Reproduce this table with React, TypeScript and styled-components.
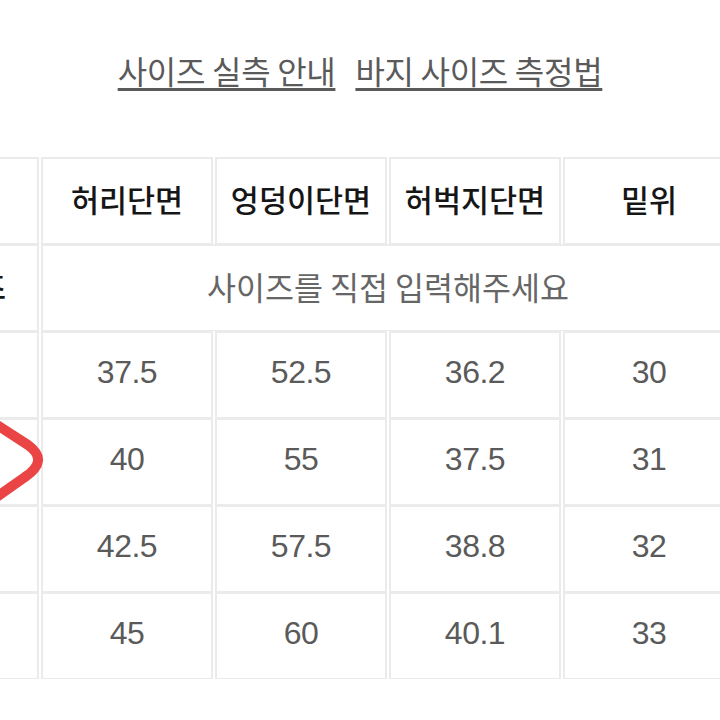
import React from "react";
import styled, { createGlobalStyle } from "styled-components";

const Global = createGlobalStyle`
  * { box-sizing: border-box; }
  html, body { margin: 0; padding: 0; background: #ffffff; }
  body { font-family: "Noto Sans CJK KR", "Noto Sans", sans-serif; overflow: hidden; }
`;

const Page = styled.div`
  position: relative;
  width: 720px;
  height: 720px;
  overflow: hidden;
  background: #fff;
`;

const TitleBar = styled.div`
  height: 157px;
  display: flex;
  justify-content: center;
  align-items: flex-start;
  gap: 20px;
  padding-top: 48px;
`;

const TitleLink = styled.a`
  font-family: "Noto Sans CJK KR", sans-serif;
  font-size: 32px;
  line-height: 44px;
  color: #5a5a5a;
  text-decoration: underline;
  text-decoration-thickness: 3px;
  text-underline-offset: 4px;
  letter-spacing: -0.3px;
`;

const Table = styled.table`
  border-collapse: separate;
  border-spacing: 2px 0;
  table-layout: fixed;
  margin-left: -113px;
  width: 850px;
`;

const Cell = styled.td<{ $head?: boolean; $note?: boolean; $w?: number }>`
  width: ${(p) => (p.$w ? `${p.$w}px` : "172px")};
  height: 87px;
  padding: 0 0 5px 0;
  border-left: 2px solid #ebebeb;
  border-right: 2px solid #ebebeb;
  border-top: 2px solid #ebebeb;
  border-bottom: 1px solid #ebebeb;
  text-align: center;
  vertical-align: middle;
  white-space: nowrap;
  font-family: ${(p) =>
    p.$head || p.$note
      ? `"Noto Sans CJK KR", sans-serif`
      : `"Liberation Sans", "Noto Sans CJK KR", sans-serif`};
  font-size: ${(p) => (p.$head ? "30.5px" : p.$note ? "31.5px" : "32px")};
  font-weight: ${(p) => (p.$head ? 500 : 400)};
  color: ${(p) => (p.$head ? "#161616" : p.$note ? "#666666" : "#5a5a5a")};
  letter-spacing: ${(p) => (p.$head || p.$note ? "0" : "-0.5px")};
`;

const Mark = styled.svg`
  position: absolute;
  left: 0;
  top: 407px;
  width: 60px;
  height: 100px;
  pointer-events: none;
`;

const heads = ["허리단면", "엉덩이단면", "허벅지단면", "밑위"];
const rows = [
  ["37.5", "52.5", "36.2", "30"],
  ["40", "55", "37.5", "31"],
  ["42.5", "57.5", "38.8", "32"],
  ["45", "60", "40.1", "33"],
];

export default function App() {
  return (
    <Page>
      <Global />
      <TitleBar>
        <TitleLink>사이즈 실측 안내</TitleLink>
        <TitleLink>바지 사이즈 측정법</TitleLink>
      </TitleBar>
      <Table>
        <tbody>
          <tr>
            <Cell $head $w={150}></Cell>
            {heads.map((h) => (
              <Cell $head key={h}>
                {h}
              </Cell>
            ))}
          </tr>
          <tr>
            <Cell $head $w={150}>
              사이즈
            </Cell>
            <Cell $note colSpan={4}>
              사이즈를 직접 입력해주세요
            </Cell>
          </tr>
          {rows.map((r, i) => (
            <tr key={i}>
              <Cell $head $w={150}></Cell>
              {r.map((v, j) => (
                <Cell key={j}>{v}</Cell>
              ))}
            </tr>
          ))}
        </tbody>
      </Table>
      <Mark viewBox="0 0 60 100">
        <path
          d="M -6 16 L 28 38 Q 39 46 38 54 Q 37 62 25 70 L -6 92"
          fill="none"
          stroke="#ea4444"
          strokeWidth="10"
          strokeLinecap="round"
          strokeLinejoin="round"
        />
      </Mark>
    </Page>
  );
}
